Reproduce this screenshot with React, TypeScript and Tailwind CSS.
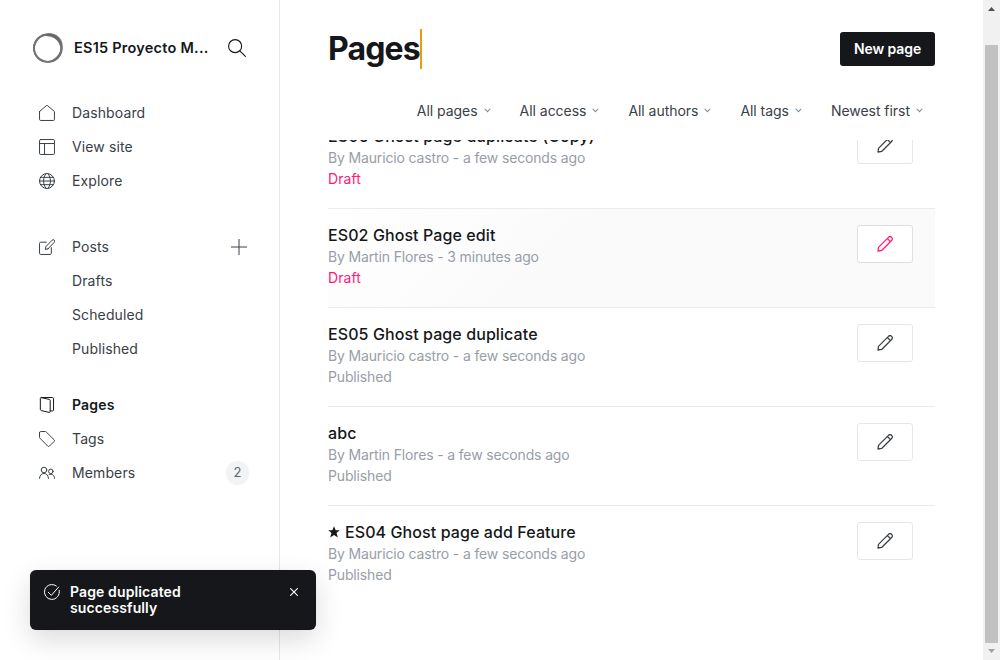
import type { ReactNode } from "react";

type IconProps = { className?: string; children: ReactNode; w?: number };

function Icon({ className = "h-4 w-4", children, w = 1.4 }: IconProps) {
  return (
    <svg viewBox="0 0 24 24" className={`shrink-0 ${className}`} fill="none" stroke="currentColor" strokeWidth={w} strokeLinecap="round" strokeLinejoin="round">
      {children}
    </svg>
  );
}

const icons = {
  home: <path d="M.8 9.8v11.7c0 1 .7 1.7 1.7 1.7h19c1 0 1.700-.7 1.700-1.700V9.8L13.200 1.200a1.800 1.800 0 0 0-2.400 0L.8 9.800Z" />,
  site: (
    <>
      <rect x=".8" y=".8" width="22.4" height="22.4" rx="1.6" />
      <path d="M.8 6.800h22.400M8.300 6.800v16.400" />
    </>
  ),
  globe: (
    <>
      <circle cx="12" cy="12" r="11.2" />
      <path d="M.8 12h22.400M2.600 6.500h18.800M2.600 17.500h18.800M10.600 1C5.500 7 5.500 17 10.600 23M13.400 1c5.100 6 5.100 16 0 22" />
    </>
  ),
  compose: (
    <>
      <path d="M18.500 13v8.500c0 1-.7 1.700-1.700 1.700H2.500c-1 0-1.700-.7-1.700-1.700v-15c0-1 .7-1.700 1.700-1.700H11" />
      <path d="m13.500 14.700-4.200 1 1-4.200L19.700 1.700a2.200 2.200 0 0 1 3.200 3.200L13.500 14.700Z" />
    </>
  ),
  pages: (
    <>
      <path d="M3.500 .9 15.300 3.600c1 .2 1.500.8 1.500 1.700v16.500c0 1-.8 1.600-1.700 1.300L3.300 20.300c-.8-.2-1.300-.8-1.300-1.600V2.200C2 1.300 2.600.8 3.500.8Z" />
      <path d="M3.500.8h16.800c.9 0 1.500.6 1.500 1.500v17.200c0 .8-.6 1.400-1.500 1.400h-3.400" />
    </>
  ),
  tag: <path d="M.8 2.300v6.900c0 .7.2 1.200.7 1.700l11.700 11.800c.7.700 1.700.7 2.400 0l7.100-7.100c.7-.7.7-1.700 0-2.400L10.900 1.500c-.5-.5-1-.7-1.700-.7H2.300C1.500.8.8 1.500.8 2.300Z" />,
  members: (
    <>
      <circle cx="7.500" cy="7.500" r="4.200" />
      <path d="M.8 20.200c0-4.500 2.900-7.500 6.700-7.500s6.700 3 6.700 7.500" />
      <circle cx="17.800" cy="9.500" r="3.400" />
      <path d="M15.200 14.200c4.200-1.800 8 1 8 6" />
    </>
  ),
};

function NavItem({ icon, label, active, children }: { icon?: ReactNode; label: string; active?: boolean; children?: ReactNode }) {
  return (
    <li className={`flex h-[34px] items-center ${active ? "text-[#15171a]" : "text-[#394047]"}`}>
      <span className="ml-[39px] w-[33px]">{icon && <Icon w={1.5}>{icon}</Icon>}</span>
      <span className={`flex-1 pb-[2px] text-[14px] ${active ? "font-semibold tracking-[0.2px]" : "tracking-[0.12px]"}`}>{label}</span>
      {children}
    </li>
  );
}

function Logo() {
  return (
    <svg viewBox="0 0 32 32" className="h-8 w-8 shrink-0" fill="none">
      <path fillRule="evenodd" fill="#a0a0a0" d="M14 2c8-2 14.500 2.500 16.200 8 1 4 .8 8.500-1.500 12.500-2 3.500-5.500 6-9.500 7l2.500-2.500c4-2.300 6.300-6 6.600-10.500C28 9.500 24.500 5.500 19 4.200l-6-.2Z" />
      <ellipse cx="15.800" cy="16.200" rx="13.800" ry="13.700" stroke="#555" strokeWidth="1.900" />
      <ellipse cx="15.900" cy="15.700" rx="14.500" ry="13" transform="rotate(-48 15.900 15.700)" stroke="#777" strokeWidth="1" />
      <ellipse cx="15.600" cy="16.600" rx="14" ry="12.800" transform="rotate(35 15.600 16.600)" stroke="#777" strokeWidth="1.200" />
      <path d="M13 3c8-1.200 14.500 3 16.300 9.500" stroke="#666" strokeWidth=".9" />
    </svg>
  );
}

function Sidebar() {
  return (
    <nav className="flex h-full w-[280px] shrink-0 flex-col border-r border-[#e5e7ea]">
      <div className="mt-8 flex h-8 items-center pl-8 text-[#15171a]">
        <Logo />
        <span className="ml-[10px] w-[154px] text-[14.5px] font-semibold tracking-[0.23px]">ES15 Proyecto M...</span>
        <Icon className="h-[18px] w-[18px]" w={1.5}>
          <circle cx="9.500" cy="9.500" r="8.700" />
          <path d="m15.700 15.700 7.500 7.500" />
        </Icon>
      </div>
      <ul className="mt-8">
        <NavItem icon={icons.home} label="Dashboard" />
        <NavItem icon={icons.site} label="View site" />
        <NavItem icon={icons.globe} label="Explore" />
      </ul>
      <ul className="mt-8">
        <NavItem icon={icons.compose} label="Posts">
          <Icon className="mr-8 h-4 w-4" w={1.5}>
            <path d="M12 0v24M0 12h24" />
          </Icon>
        </NavItem>
        <NavItem label="Drafts" />
        <NavItem label="Scheduled" />
        <NavItem label="Published" />
      </ul>
      <ul className="mt-[22px]">
        <NavItem icon={icons.pages} label="Pages" active />
        <NavItem icon={icons.tag} label="Tags" />
        <NavItem icon={icons.members} label="Members">
          <span className="mr-[30px] flex h-6 w-[23px] items-center justify-center rounded-full bg-[#f1f3f4] text-[13px] text-[#54666d]">2</span>
        </NavItem>
      </ul>
    </nav>
  );
}

function Filter({ label }: { label: string }) {
  return (
    <button className="flex items-center gap-[6px] text-[14px] tracking-[-0.04px] text-[#394047]">
      {label}
      <svg viewBox="0 0 8 8" className="mt-px h-[7px] w-[7px]" fill="none" stroke="#7c8b9a" strokeWidth="1.200">
        <path d="m.8 2 3.200 3.300L7.200 2" />
      </svg>
    </button>
  );
}

type Page = { title: string; by: string; status: "Draft" | "Published"; hover?: boolean; star?: boolean };

const pages: Page[] = [
  { title: "ES06 Ghost page duplicate (Copy)", by: "By Mauricio castro - a few seconds ago", status: "Draft" },
  { title: "ES02 Ghost Page edit", by: "By Martin Flores - 3 minutes ago", status: "Draft", hover: true },
  { title: "ES05 Ghost page duplicate", by: "By Mauricio castro - a few seconds ago", status: "Published" },
  { title: "abc", by: "By Martin Flores - a few seconds ago", status: "Published" },
  { title: "ES04 Ghost page add Feature", by: "By Mauricio castro - a few seconds ago", status: "Published", star: true },
];

function PageRow({ page }: { page: Page }) {
  return (
    <li className={`flex h-[99px] justify-between border-t border-[#e9ebed] pt-4 pr-[22px] ${page.hover ? "bg-[linear-gradient(315deg,#fafafa_60%,#fff_100%)]" : ""}`}>
      <div className="text-[14px] leading-[21px] tracking-[-0.15px] text-[#989ea8]">
        <h3 className="flex items-center text-[16px] leading-[21px] font-medium tracking-[0.09px] text-[#15171a]">
          {page.star && (
            <svg viewBox="0 0 24 24" className="mr-[5px] mb-px h-3 w-3" fill="#15171a">
              <path d="m12 .5 3.300 8h8.200l-6.500 5.700 2.600 8.800L12 18 4.400 23 7 14.200.5 8.500h8.200L12 .5Z" />
            </svg>
          )}
          {page.title}
        </h3>
        <p>{page.by}</p>
        <p className={page.status === "Draft" ? "tracking-[0.1px] text-[#ff1a75]" : ""}>{page.status}</p>
      </div>
      <button className={`flex h-[38px] w-14 items-center justify-center rounded-[3px] border bg-white ${page.hover ? "border-[#dde1e5] text-[#ff1a75]" : "border-[#e5e8eb] text-[#394047]"}`}>
        <Icon className="h-4 w-4" w={1.9}>
          <path d="M1.500 22.500 2.200 17 17.200 2a3.200 3.200 0 0 1 4.700 4.700L7 21.700ZM15.500 3.700l4.700 4.700" />
        </Icon>
      </button>
    </li>
  );
}

function Toast() {
  return (
    <div className="absolute top-[570px] left-[30px] flex h-[60px] w-[286px] items-start rounded-[6px] bg-[#15171a] px-[14px] pt-[14px] text-white shadow-[0_0_1px_rgba(0,0,0,0.12),0_10px_28px_rgba(0,0,0,0.14)]">
      <Icon w={1.5}>
        <path d="M22.800 9.500A11.200 11.200 0 1 1 18.500 2.900M6.500 12.500l4.500 4.500L22 4.500" />
      </Icon>
      <p className="ml-[10px] w-[150px] text-[14px] leading-4 font-semibold tracking-[0.12px]">Page duplicated successfully</p>
      <svg viewBox="0 0 8 8" className="mt-1 mr-1 ml-auto h-2 w-2" stroke="#fff" strokeWidth="1.100">
        <path d="m.2.2 7.600 7.600M7.800.2.2 7.800" />
      </svg>
    </div>
  );
}

function Scrollbar() {
  return (
    <div className="flex h-full w-[17px] shrink-0 flex-col items-center bg-[#f1f1f1]">
      <div className="h-[45px]">
        <svg viewBox="0 0 7 4" className="mt-[7px] h-1 w-[7px]" fill="#505050">
          <path d="M0 4 3.500 0 7 4Z" />
        </svg>
      </div>
      <div className="h-[598px] w-[13px] bg-[#c1c1c1]" />
      <svg viewBox="0 0 7 4" className="mt-[6px] h-1 w-[7px]" fill="#a3a3a3">
        <path d="M0 0h7L3.500 4Z" />
      </svg>
    </div>
  );
}

export default function App() {
  return (
    <div className="relative flex h-[660px] w-[1000px] overflow-hidden bg-white font-['Inter',sans-serif] text-[#15171a]">
      <Sidebar />
      <main className="flex h-full flex-1 flex-col pr-12 pl-12">
        <header className="mt-[29px] flex h-10 items-center justify-between">
          <h1 className="flex h-10 items-center border-r-2 border-[#e69c0f] text-[32px] leading-10 font-bold tracking-[-0.85px]">Pages</h1>
          <button className="h-[34px] w-[95px] rounded-[3px] bg-[#15171a] pb-[2px] text-[14px] font-semibold tracking-[-0.1px] text-white">New page</button>
        </header>
        <div className="mt-[30px] flex h-[22px] items-center justify-end gap-[29px] pr-3">
          <Filter label="All pages" />
          <Filter label="All access" />
          <Filter label="All authors" />
          <Filter label="All tags" />
          <Filter label="Newest first" />
        </div>
        <section className="mt-[19px] flex-1 overflow-hidden">
          <ul className="-mt-[31px]">
            {pages.map((page) => (
              <PageRow key={page.title} page={page} />
            ))}
          </ul>
        </section>
      </main>
      <Scrollbar />
      <Toast />
    </div>
  );
}
